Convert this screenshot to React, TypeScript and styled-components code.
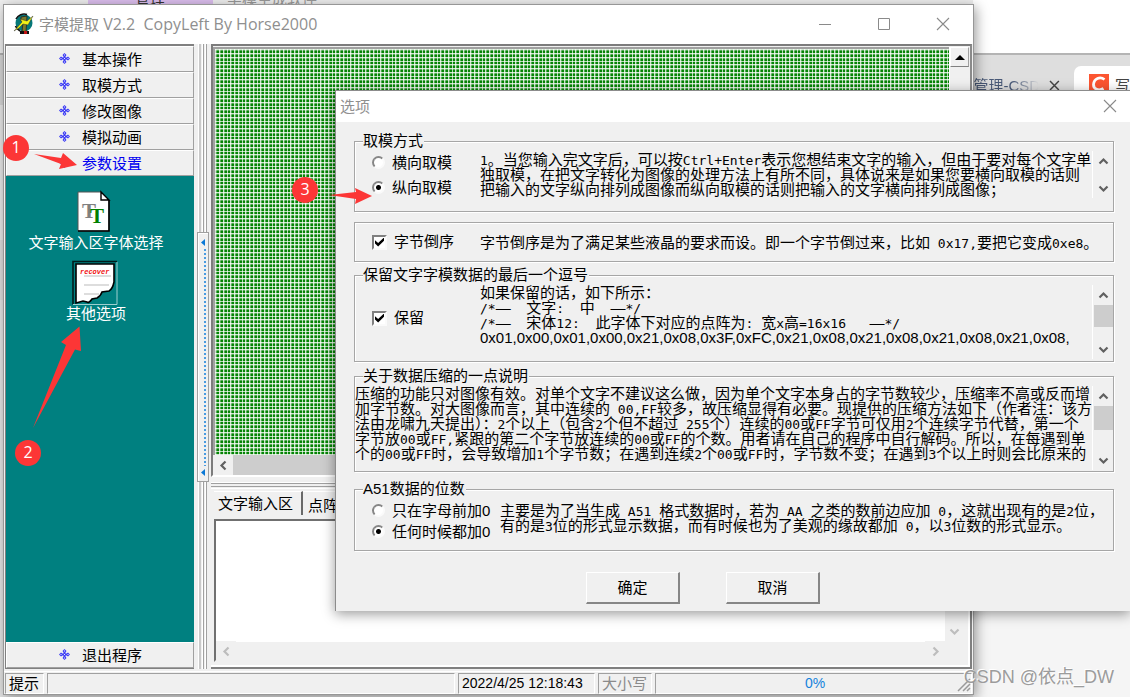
import React from "react";
import styled, { createGlobalStyle, css } from "styled-components";

const GlobalStyle = createGlobalStyle`
  * { box-sizing: border-box; }
  html, body { margin: 0; padding: 0; }
  body, button, input, textarea {
    font-family: "Liberation Sans", "Noto Sans CJK SC", sans-serif;
    font-size: 15px;
    color: #000;
  }
  body { overflow: hidden; }
  button { border: 0; padding: 0; background: none; }
`;

/* ---------- desktop and the browser behind the windows ---------- */

const Desktop = styled.div`
  position: relative;
  min-height: 100vh;
  overflow: hidden;
  background: #f5f5f5;
`;

const Backdrop = styled.div`
  position: absolute;
  inset: 0;
  display: flex;
  overflow: hidden;
`;

const BackEdge = styled.div`
  flex: 1;
  background: linear-gradient(#efefef 0 53px, #b0b0b0 53px 55px, #d6d6d6 55px 105px, #e8e8e8 105px 240px, #dedede 240px 300px, #e6e6e6 300px);
`;

const BackRows = styled.div`
  display: flex;
  height: 16px;
  margin-top: -8px;
  line-height: 16px;
  padding-left: 88px;
`;

const PurpleTab = styled.span`
  width: 125px;
  padding-left: 47px;
  background: #dcbfee;
  color: #333;
`;

const GreyTab = styled.span`
  padding-left: 14px;
  color: #999;
`;

const BackBrowser = styled.div`
  display: flex;
  flex-direction: column;
  width: 157px;
  padding-top: 53px;
  background: linear-gradient(#fff 0 90px, #f5f5f5 90px);
`;

const BrowserTabs = styled.div`
  display: flex;
  align-items: flex-start;
  height: 60px;
  border-top: 2px solid #b4b4b4;
  background: #dedede;
  overflow: hidden;
  white-space: nowrap;
`;

const BrowserTab = styled.span`
  width: 68px;
  height: 40px;
  padding-top: 20px;
  line-height: 22px;
  direction: rtl;
  overflow: hidden;
  background: linear-gradient(90deg, #4a5a78 60%, #dedede 98%);
  background-clip: text;
  color: transparent;
`;

const BrowserClose = styled.svg`
  width: 11px;
  height: 11px;
  margin: 25px 14px 0 9px;
`;

const BrowserActive = styled.span`
  display: flex;
  gap: 6px;
  flex: 1;
  height: 50px;
  margin-top: 11px;
  padding: 8px 0 0 15px;
  border-radius: 7px 0 0 0;
  background: #fff;
  color: #444;
`;

const SiteLogo = styled.svg`
  flex: none;
  width: 20px;
  height: 20px;
`;

/* ---------- main window ---------- */

const MainWindow = styled.main`
  position: absolute;
  inset: 4px 156px 2px 3px;
  display: flex;
  flex-direction: column;
  border: 1px solid #979797;
  background: #f0f0f0;
  box-shadow: 2px 3px 12px rgba(0, 0, 0, 0.4);
`;

const TitleBar = styled.header`
  display: flex;
  align-items: center;
  height: 39px;
  flex: none;
  padding: 0 23px 2px 9px;
  background: #fff;
  color: #8f8f8f;
`;

const AppIcon = styled.svg`
  width: 22px;
  height: 22px;
  margin-right: 4px;
`;

const WindowTitle = styled.h1`
  flex: 1;
  margin: 0;
  font: 400 15px/20px "Open Sans", "Noto Sans CJK SC", sans-serif;
  white-space: pre;
`;

const TitleLatin = styled.span`
  font-size: 16px;
`;

const CaptionButtons = styled.div`
  display: flex;
  gap: 45px;
`;

const CaptionButton = styled.button`
  display: flex;
  width: 14px;
  height: 14px;
`;

const Body = styled.div`
  display: flex;
  flex: 1;
  min-height: 0;
  padding: 0 1px 2px 1px;
`;

const SidePanel = styled.nav`
  display: flex;
  flex-direction: column;
  width: 189px;
  border: solid #808080;
  border-width: 2px 0 1px 1px;
  background: #008080;
`;

const NavButton = styled.button<{ $active?: boolean }>`
  display: flex;
  align-items: center;
  gap: 12px;
  width: 100%;
  height: 26px;
  flex: none;
  padding: 0 0 1px 52px;
  border: 1px solid;
  border-color: #fff #a0a0a0 #a0a0a0 #fff;
  background: #f0f0f0;
  color: ${(p) => (p.$active ? "#0000f0" : "#000")};
`;

const Tools = styled.div`
  display: flex;
  flex: 1;
  flex-direction: column;
  align-items: center;
  gap: 9px;
  padding: 14px 8px 0 0;
`;

const ToolButton = styled.button`
  display: flex;
  flex-direction: column;
  align-items: center;
  color: #fff;
  line-height: 18px;
`;

const ToolSvg = styled.svg`
  width: 44px;
  height: 44px;
  overflow: visible;
`;

const Splitter = styled.div`
  display: flex;
  align-items: center;
  width: 16px;
  padding-left: 3px;
  background: linear-gradient(90deg, #f0f0f0 0 4px, #fff 4px 5px, #c9c9c9 5px 7px, #f0f0f0 7px 8px, #fff 8px 9px, #a0a0a0 9px 10px, #f0f0f0 10px 11px, #fff 11px 12px, #a0a0a0 12px 13px, #f0f0f0 13px);
`;

const SplitHandle = styled.button`
  display: flex;
  flex-direction: column;
  align-items: center;
  gap: 3px;
  width: 12px;
  height: 250px;
  padding: 6px 0 5px;
  border: 1px solid #a0a0a0;
  background: #f0f0f0;
  box-shadow: inset 1px 1px #fff;
`;

const HandleArrow = styled.svg`
  width: 4px;
  height: 7px;
  flex: none;
`;

const HandleDots = styled.span`
  flex: 1;
  width: 2px;
  margin-left: 3px;
  background: repeating-linear-gradient(#4a9be0 0 2px, #f0f0f0 2px 4px);
`;

const Workspace = styled.section`
  display: flex;
  flex: 1;
  min-width: 0;
  flex-direction: column;
  padding-left: 1px;
`;

const CanvasFrame = styled.div`
  display: grid;
  flex: 1;
  grid-template-columns: 1fr 20px;
  grid-template-rows: 1fr 20px;
  border: 2px solid;
  border-color: #7c7c7c #8a8a8a #fff #7c7c7c;
  padding: 1px 1px 0 0;
`;

const line = (dir: string) => `linear-gradient(${dir},
  rgba(255,255,255,.8) 0 1px, rgba(255,255,255,.3) 1px 2px, transparent 2px 4px,
  rgba(255,255,255,.8) 4px 5px, rgba(255,255,255,.3) 5px 6px, transparent 6px 8px,
  rgba(255,255,255,.8) 8px 9px, rgba(255,255,255,.3) 9px 10px, transparent 10px 12px,
  rgba(255,255,255,.7) 12px 13px, transparent 13px 15px)`;

const PixelGrid = styled.div`
  border: solid #a0a0a0;
  border-width: 2px 0 0 2px;
  background-color: #048404;
  background-image: ${line("90deg")}, ${line("180deg")};
  background-size: 15px 15px;
`;

const ScrollColumn = styled.div`
  display: flex;
  flex-direction: column;
  border-left: 1px solid #fff;
  background: #f0f0f0;
`;

const RaisedArrow = styled.button`
  display: grid;
  place-items: center;
  height: 20px;
  border: 1px solid;
  border-color: #fff #a0a0a0 #808080 #fff;
  background: #f0f0f0;
`;

const ScrollRow = styled.div`
  display: flex;
  background: #cdcdcd;
`;

const FlatArrow = styled.button`
  display: grid;
  place-items: center;
  width: 20px;
  height: 20px;
  flex: none;
  background: #f0f0f0;
`;

const RowSplitter = styled.div`
  height: 13px;
  background: linear-gradient(#f0f0f0 0 5px, #fff 5px 6px, #a0a0a0 6px 7px, #f0f0f0 7px 9px, #a0a0a0 9px 10px, #f0f0f0 10px 11px, #fff 11px 12px, #f0f0f0 12px);
`;

const TabPanel = styled.div`
  display: flex;
  flex-direction: column;
  height: 179px;
  flex: none;
  padding: 0 4px 5px 3px;
  border: solid #808080;
  border-width: 0 2px 2px 0;
  box-shadow: inset -2px -2px #fff;
`;

const Tabs = styled.div`
  display: flex;
  height: 29px;
  padding-top: 1px;
`;

const Tab = styled.button<{ $active?: boolean }>`
  height: ${(p) => (p.$active ? 24 : 26)}px;
  padding: ${(p) => (p.$active ? "0 8px 3px 4px" : "0 9px 0 5px")};
  border-top: 1px solid #fff;
  ${(p) =>
    p.$active &&
    css`
      border-right: 2px solid #696969;
    `}
`;

const EditFrame = styled.div`
  display: grid;
  flex: 1;
  grid-template-columns: 1fr 19px;
  grid-template-rows: 1fr 18px;
  border: 2px solid;
  border-color: #707070 #f0f0f0 #f0f0f0 #707070;
`;

const EditBox = styled.textarea`
  width: 100%;
  height: 100%;
  border: 0;
  padding: 2px;
  resize: none;
  outline: none;
  background: #fff;
`;

const EditScroll = styled.div<{ $vertical?: boolean }>`
  display: flex;
  flex-direction: ${(p) => (p.$vertical ? "column" : "row")};
  justify-content: space-between;
  align-items: center;
  padding-bottom: ${(p) => (p.$vertical ? 5 : 0)}px;
`;

const StatusBar = styled.footer`
  display: grid;
  grid-template-columns: 39px 408px 137px 54px 1fr;
  gap: 3px;
  flex: none;
  height: 23px;
  padding: 1px;
  border-top: 1px solid #fff;
  white-space: nowrap;
`;

const StatusCell = styled.span<{ $tone?: string; $small?: boolean; $center?: boolean }>`
  padding-left: 3px;
  border: 1px solid;
  border-color: #a0a0a0 #fff #fff #a0a0a0;
  color: ${(p) => p.$tone || "#000"};
  font-size: ${(p) => (p.$small ? 14 : 15)}px;
  line-height: 19px;
  text-align: ${(p) => (p.$center ? "center" : "left")};
`;

const Grip = styled.svg`
  position: absolute;
  right: 2px;
  bottom: 2px;
  width: 14px;
  height: 14px;
`;

/* ---------- options dialog ---------- */

const Dialog = styled.section`
  position: absolute;
  top: 90px;
  left: 335px;
  right: 0;
  border: solid #8c8c8c;
  border-width: 1px 0 0 1px;
  background: #f0f0f0;
  box-shadow: 0 3px 12px rgba(0, 0, 0, 0.4);
`;

const DialogTitle = styled.header`
  display: flex;
  align-items: center;
  justify-content: space-between;
  height: 31px;
  padding: 0 13px 2px 4px;
  background: #fff;
  color: #8f8f8f;
`;

const DialogName = styled.h2`
  margin: 0;
  font-size: 15px;
  font-weight: 400;
`;

const DialogBody = styled.form`
  display: flex;
  flex-direction: column;
  padding: 11px 16px 7px 18px;
`;

const Group = styled.fieldset<{ $height: number; $gap?: number }>`
  display: flex;
  min-width: 0;
  height: ${(p) => p.$height}px;
  margin: ${(p) => p.$gap || 0}px 0 0;
  padding: 0;
  border: 1px solid #a6a6a6;
  box-shadow: inset 1px 1px #fff, 1px 1px #fff;
`;

const Legend = styled.legend`
  height: 16px;
  margin-left: 8px;
  padding: 0 1px 0 0;
  background: #f0f0f0;
  line-height: 16px;
`;

const Choices = styled.div<{ $width: number; $row: number; $pad?: number }>`
  display: grid;
  align-content: start;
  grid-auto-rows: ${(p) => p.$row}px;
  width: ${(p) => p.$width}px;
  flex: none;
  padding: ${(p) => p.$pad || 0}px 0 0 17px;
`;

const Choice = styled.label`
  display: flex;
  align-items: center;
  gap: 7px;
  line-height: 20px;
  white-space: nowrap;
`;

const Radio = styled.input`
  appearance: none;
  width: 13px;
  height: 13px;
  margin: 0;
  border: 2px solid;
  border-color: #868686 #fafafa #fafafa #868686;
  border-radius: 50%;
  background: #fff;
  &:checked {
    background: radial-gradient(circle, #000 0 2px, #fff 3px);
  }
`;

const Check = styled.input`
  appearance: none;
  display: grid;
  width: 15px;
  height: 15px;
  margin: 0;
  border: 2px solid;
  border-color: #808080 #fafafa #fafafa #808080;
  background: #fff;
  &:checked::after {
    content: "";
    margin: 1px;
    background: #000;
    clip-path: polygon(0 30%, 35% 62%, 100% 0, 100% 36%, 35% 100%, 0 66%);
  }
`;

const MemoText = styled.p<{ $pad: number }>`
  flex: 1;
  min-width: 0;
  margin: 0;
  padding-top: ${(p) => p.$pad}px;
  line-height: 15px;
  white-space: pre;
`;

const HalfWidth = styled.span`
  font-family: "DejaVu Sans Mono", monospace;
  font-size: 13px;
  line-height: 0;
`;

const MemoScroll = styled.div<{ $height: number }>`
  display: flex;
  flex-direction: column;
  align-items: center;
  width: 21px;
  height: ${(p) => p.$height}px;
  flex: none;
  margin-top: 2px;
  border-left: 1px solid #fff;
`;

const MemoThumb = styled.span<{ $height: number }>`
  width: 19px;
  height: ${(p) => p.$height}px;
  background: #cdcdcd;
`;

const Spacer = styled.span`
  flex: 1;
`;

const Actions = styled.div`
  display: flex;
  gap: 46px;
  margin-top: 21px;
  padding-left: 232px;
`;

const PushButton = styled.button`
  width: 94px;
  height: 32px;
  padding-bottom: 2px;
  border: solid;
  border-width: 1px 2px 2px 1px;
  border-color: #fff #868686 #868686 #fff;
  background: #f0f0f0;
`;

/* ---------- annotations ---------- */

const Marks = styled.svg`
  position: absolute;
  top: 0;
  left: 0;
  pointer-events: none;
`;

const Badge = styled.span<{ $x: number; $y: number }>`
  position: absolute;
  left: ${(p) => p.$x}px;
  top: ${(p) => p.$y}px;
  width: 26px;
  height: 26px;
  border-radius: 50%;
  background: #fc3636;
  color: #fff;
  font: 16px/25px "Open Sans", sans-serif;
  text-align: center;
`;

const Watermark = styled.span`
  position: absolute;
  right: 16px;
  bottom: 6px;
  color: #9c9c9c;
  font-size: 18px;
  line-height: 28px;
  text-shadow: -1px -1px #fff;
`;

/* ---------- drawings ---------- */

const turns = { up: 0, right: 90, down: 180, left: 270 };

function Chevron({ dir, color = "#606060" }: { dir: keyof typeof turns; color?: string }) {
  return (
    <svg width="11" height="11" viewBox="0 0 11 11">
      <path d="M1.5 7.5 5.5 3.5 9.5 7.5" fill="none" stroke={color} strokeWidth="2.2" transform={`rotate(${turns[dir]} 5.5 5.5)`} />
    </svg>
  );
}

function Diamond() {
  return (
    <svg width="11" height="11" viewBox="0 0 11 11">
      <path
        d="M5.5 0 7.5 2 6.5 3.500V4.500H7.500L9 3.500 11 5.500 9 7.500 7.500 6.500H6.500V7.500L7.500 9 5.500 11 3.500 9 4.500 7.500V6.500H3.500L2 7.500 0 5.500 2 3.500 3.500 4.500H4.500V3.500L3.500 2Z"
        fill="#3c3cf4"
      />
      <path d="M5 1.500H6V2.500H5ZM5 8.500H6V9.500H5ZM1.500 5H2.500V6H1.500ZM8.500 5H9.500V6H8.500ZM5 5H6V6H5Z" fill="#e8e8ff" />
    </svg>
  );
}

function Cross({ color = "#8a8a8a" }: { color?: string }) {
  return (
    <svg width="14" height="14" viewBox="0 0 14 14">
      <path d="M1 1 13 13M13 1 1 13" stroke={color} strokeWidth="1.1" />
    </svg>
  );
}

function ArrowButton({ dir, label }: { dir: keyof typeof turns; label: string }) {
  return (
    <FlatArrow type="button" aria-label={label}>
      <Chevron dir={dir} />
    </FlatArrow>
  );
}

/* Runs of Latin text take half the width of a Chinese character. */
function Memo({ pad, text, children }: { pad: number; text: string; children?: React.ReactNode }) {
  return (
    <MemoText $pad={pad}>
      {text.split(/([ -~]+)/).map((run, i) => (i % 2 ? <HalfWidth key={i}>{run}</HalfWidth> : run))}
      {children}
    </MemoText>
  );
}

const navItems = ["基本操作", "取模方式", "修改图像", "模拟动画", "参数设置"];

const modeNote = [
  "1。当您输入完文字后，可以按Ctrl+Enter表示您想结束文字的输入，但由于要对每个文字单",
  "独取模，在把文字转化为图像的处理方法上有所不同，具体说来是如果您要横向取模的话则",
  "把输入的文字纵向排列成图像而纵向取模的话则把输入的文字横向排列成图像；",
].join("\n");

const orderNote = "字节倒序是为了满足某些液晶的要求而设。即一个字节倒过来，比如 0x17,要把它变成0xe8。";

const commaNote = [
  "如果保留的话，如下所示：",
  "/*—  文字:  中  —*/",
  "/*—  宋体12:  此字体下对应的点阵为: 宽x高=16x16   —*/",
  "",
].join("\n");

const commaBytes = "0x01,0x00,0x01,0x00,0x21,0x08,0x3F,0xFC,0x21,0x08,0x21,0x08,0x21,0x08,0x21,0x08,";

const packNote = [
  "压缩的功能只对图像有效。对单个文字不建议这么做，因为单个文字本身占的字节数较少，压缩率不高或反而增",
  "加字节数。对大图像而言，其中连续的 00,FF较多，故压缩显得有必要。现提供的压缩方法如下（作者注：该方",
  "法由龙啸九天提出）：2个以上（包含2个但不超过 255个）连续的00或FF字节可仅用2个连续字节代替，第一个",
  "字节放00或FF,紧跟的第二个字节放连续的00或FF的个数。用者请在自己的程序中自行解码。所以，在每遇到单",
  "个的00或FF时，会导致增加1个字节数；在遇到连续2个00或FF时，字节数不变；在遇到3个以上时则会比原来的",
].join("\n");

const digitsNote = [
  "主要是为了当生成 A51 格式数据时，若为 AA 之类的数前边应加 0，这就出现有的是2位，",
  "有的是3位的形式显示数据，而有时候也为了美观的缘故都加 0，以3位数的形式显示。",
].join("\n");

function OptionsDialog() {
  return (
    <Dialog role="dialog" aria-labelledby="options-title">
      <DialogTitle>
        <DialogName id="options-title">选项</DialogName>
        <CaptionButton aria-label="关闭选项">
          <Cross />
        </CaptionButton>
      </DialogTitle>
      <DialogBody>
        <Group $height={79}>
          <Legend>取模方式</Legend>
          <Choices $width={125} $row={25} $pad={1}>
            <Choice>
              <Radio type="radio" name="mode" />
              横向取模
            </Choice>
            <Choice>
              <Radio type="radio" name="mode" defaultChecked />
              纵向取模
            </Choice>
          </Choices>
          <Memo pad={3} text={modeNote} />
          <MemoScroll $height={47}>
            <ArrowButton dir="up" label="向上" />
            <Spacer />
            <ArrowButton dir="down" label="向下" />
          </MemoScroll>
        </Group>

        <Group $height={40} $gap={10}>
          <Choices $width={125} $row={38}>
            <Choice>
              <Check type="checkbox" defaultChecked />
              字节倒序
            </Choice>
          </Choices>
          <Memo pad={12} text={orderNote} />
        </Group>

        <Group $height={95} $gap={5}>
          <Legend>保留文字字模数据的最后一个逗号</Legend>
          <Choices $width={125} $row={70}>
            <Choice>
              <Check type="checkbox" defaultChecked />
              保留
            </Choice>
          </Choices>
          <Memo pad={2} text={commaNote}>
            {commaBytes}
          </Memo>
          <MemoScroll $height={74}>
            <ArrowButton dir="up" label="向上" />
            <MemoThumb $height={22} />
            <Spacer />
            <ArrowButton dir="down" label="向下" />
          </MemoScroll>
        </Group>

        <Group $height={104} $gap={6}>
          <Legend>关于数据压缩的一点说明</Legend>
          <Memo pad={2} text={packNote} />
          <MemoScroll $height={84}>
            <ArrowButton dir="up" label="向上" />
            <MemoThumb $height={24} />
            <Spacer />
            <ArrowButton dir="down" label="向下" />
          </MemoScroll>
        </Group>

        <Group $height={70} $gap={9}>
          <Legend>A51数据的位数</Legend>
          <Choices $width={145} $row={21} $pad={3}>
            <Choice>
              <Radio type="radio" name="digits" />
              只在字母前加0
            </Choice>
            <Choice>
              <Radio type="radio" name="digits" defaultChecked />
              任何时候都加0
            </Choice>
          </Choices>
          <Memo pad={6} text={digitsNote} />
        </Group>

        <Actions>
          <PushButton type="button">确定</PushButton>
          <PushButton type="button">取消</PushButton>
        </Actions>
      </DialogBody>
    </Dialog>
  );
}

export default function App() {
  return (
    <Desktop>
      <GlobalStyle />
      <Backdrop>
        <BackEdge>
          <BackRows>
            <PurpleTab>管理</PurpleTab>
            <GreyTab>字模生成软件</GreyTab>
          </BackRows>
        </BackEdge>
        <BackBrowser>
          <BrowserTabs>
            <BrowserTab>内容管理-CSD</BrowserTab>
            <BrowserClose viewBox="0 0 11 11">
              <path d="M1 1 10 10M10 1 1 10" stroke="#444" strokeWidth="1.5" />
            </BrowserClose>
            <BrowserActive>
              <SiteLogo viewBox="0 0 20 20">
                <rect width="20" height="20" fill="#fc5531" />
                <path d="M15.5 5.5C11 2 5 4.500 4.500 10.500 4.500 15 9.500 17.500 14.500 14.500" fill="none" stroke="#fff" strokeWidth="2.800" />
              </SiteLogo>
              写
            </BrowserActive>
          </BrowserTabs>
        </BackBrowser>
      </Backdrop>

      <MainWindow>
        <TitleBar>
          <AppIcon viewBox="0 0 22 22">
            <circle cx="11" cy="10" r="8.500" fill="#067878" />
            <path d="M3 6A9 9 0 0 1 14 1.500M2.500 13A9 9 0 0 0 7 18" fill="none" stroke="#111" strokeWidth="1.600" />
            <path d="M8 4 14 3 13 19H9L10 9 8 8Z" fill="#7d7a2a" stroke="#222" strokeWidth=".8" />
            <path d="M1 18 9 9 7 6 14 8 20 3 15 12 10 11 6 15Z" fill="#f2f216" stroke="#333" strokeWidth=".5" />
            <path d="M7 18H16V21H7Z" fill="#111" />
            <path d="M11 18H14V21H11Z" fill="#c01414" />
          </AppIcon>
          <WindowTitle>
            字模提取<TitleLatin>{" V2.2  CopyLeft By Horse2000"}</TitleLatin>
          </WindowTitle>
          <CaptionButtons>
            <CaptionButton aria-label="最小化">
              <svg width="14" height="14" viewBox="0 0 14 14">
                <path d="M1 7.500H13" stroke="#8a8a8a" />
              </svg>
            </CaptionButton>
            <CaptionButton aria-label="最大化">
              <svg width="14" height="14" viewBox="0 0 14 14">
                <path d="M1.500 1.500H12.500V12.500H1.500Z" fill="none" stroke="#8a8a8a" />
              </svg>
            </CaptionButton>
            <CaptionButton aria-label="关闭">
              <Cross />
            </CaptionButton>
          </CaptionButtons>
        </TitleBar>

        <Body>
          <SidePanel>
            {navItems.map((name, i) => (
              <NavButton key={name} $active={i === navItems.length - 1}>
                <Diamond />
                {name}
              </NavButton>
            ))}
            <Tools>
              <ToolButton>
                <ToolSvg viewBox="3 0 44 44">
                  <path d="M7 2H30L38 10V41H7Z" fill="#fff" stroke="#555" />
                  <path d="M7 41H38V10" fill="none" stroke="#000" strokeWidth="1.600" />
                  <path d="M30 2V10H38Z" fill="#fff" stroke="#000" strokeWidth="1.400" />
                  <text x="11" y="28" fill="#808080" fontFamily="Liberation Serif" fontWeight="700" fontSize="21">T</text>
                  <text x="19" y="33" fill="#008000" fontFamily="Liberation Serif" fontWeight="700" fontSize="21">T</text>
                </ToolSvg>
                文字输入区字体选择
              </ToolButton>
              <ToolButton>
                <ToolSvg viewBox="1 0 44 44">
                  <path d="M0 43.500V.5H44" fill="none" stroke="#001c1c" strokeWidth="1.600" />
                  <path d="M44 1V43.500H0" fill="none" stroke="#9fd0d0" />
                  <path
                    d="M3 3H41V21C40 26 38 29 36 30L29 31C28 34 26 36 24 37L19 38C17 41 15 42 14 41L10 40 3 42Z"
                    fill="#fff"
                    stroke="#000"
                    strokeWidth="1.600"
                  />
                  <path d="M11 15H38M11 24H36M11 33H26" stroke="#bbb" />
                  <text x="7" y="13" fill="#f01010" fontFamily="Liberation Mono" fontStyle="italic" fontWeight="700" fontSize="7">recover</text>
                </ToolSvg>
                其他选项
              </ToolButton>
            </Tools>
            <NavButton>
              <Diamond />
              退出程序
            </NavButton>
          </SidePanel>

          <Splitter>
            <SplitHandle aria-label="折叠侧栏">
              <HandleArrow viewBox="0 0 4 7">
                <path d="M4 0V7L0 3.500Z" fill="#0a78d6" />
              </HandleArrow>
              <HandleDots />
              <HandleArrow viewBox="0 0 4 7">
                <path d="M4 0V7L0 3.500Z" fill="#0a78d6" />
              </HandleArrow>
            </SplitHandle>
          </Splitter>

          <Workspace>
            <CanvasFrame>
              <PixelGrid />
              <ScrollColumn>
                <RaisedArrow aria-label="向上滚动">
                  <svg width="10" height="5" viewBox="0 0 10 5">
                    <path d="M5 0 10 5H0Z" />
                  </svg>
                </RaisedArrow>
              </ScrollColumn>
              <ScrollRow>
                <ArrowButton dir="left" label="向左滚动" />
              </ScrollRow>
            </CanvasFrame>
            <RowSplitter />
            <TabPanel>
              <Tabs>
                <Tab $active>文字输入区</Tab>
                <Tab>点阵生成区</Tab>
              </Tabs>
              <EditFrame>
                <EditBox aria-label="文字输入区" />
                <EditScroll $vertical>
                  <Spacer />
                  <Chevron dir="down" color="#bdbdbd" />
                </EditScroll>
                <EditScroll>
                  <FlatArrow aria-label="向左">
                    <Chevron dir="left" color="#bdbdbd" />
                  </FlatArrow>
                  <FlatArrow aria-label="向右">
                    <Chevron dir="right" color="#bdbdbd" />
                  </FlatArrow>
                </EditScroll>
              </EditFrame>
            </TabPanel>
          </Workspace>
        </Body>

        <StatusBar>
          <StatusCell>提示</StatusCell>
          <StatusCell />
          <StatusCell $small>2022/4/25 12:18:43</StatusCell>
          <StatusCell $tone="#8a8a8a">大小写</StatusCell>
          <StatusCell $tone="#1583dc" $small $center>
            0%
          </StatusCell>
        </StatusBar>
        <Grip viewBox="0 0 14 14">
          <path d="M1 13 13 1M6 13 13 6M10 13 13 10" stroke="#9a9a9a" strokeWidth="1.500" />
        </Grip>
      </MainWindow>

      <OptionsDialog />

      <Marks width="400" height="480" viewBox="0 0 400 480" fill="#fc3636">
        <path d="M34 154 61 158 63 153 77 165 59 169 61 164Z" />
        <path d="M33 428 66 345 61 342 79.500 326.500 81 351 75 349.500Z" />
        <path d="M329 195 356 192 355 188 372 196 355 204 356 199Z" />
      </Marks>
      <Badge $x={3} $y={135}>1</Badge>
      <Badge $x={15} $y={440}>2</Badge>
      <Badge $x={292} $y={177}>3</Badge>
      <Watermark>CSDN @依点_DW</Watermark>
    </Desktop>
  );
}
